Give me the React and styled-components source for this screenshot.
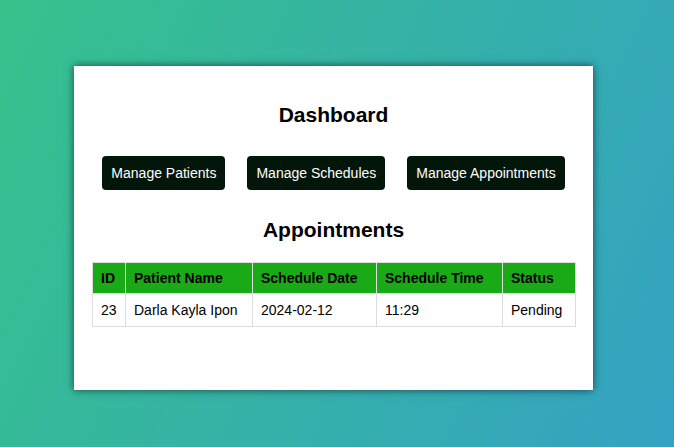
import React from 'react';
import styled, { createGlobalStyle } from 'styled-components';

const GlobalStyle = createGlobalStyle`
  html, body {
    margin: 0;
    padding: 0;
  }
  body {
    font-family: "Liberation Sans", Arial, sans-serif;
    font-size: 14px;
    color: #000;
  }
`;

const Page = styled.div`
  min-height: 100vh;
  box-sizing: border-box;
  display: flex;
  justify-content: center;
  align-items: flex-start;
  padding: 66px 7px 0 0;
  background: linear-gradient(115deg, #36c28b 0%, #34a2c3 100%);
`;

const Card = styled.div`
  width: 519px;
  box-sizing: border-box;
  background: #fff;
  padding: 20px 18px 63px;
  box-shadow: 0 0 8px rgba(0, 0, 0, 0.6);
  text-align: center;
`;

const Title = styled.h2`
  font-size: 21px;
  line-height: 24px;
  font-weight: bold;
  margin: ${(p) => p.$top}px 0 0;
`;

const ButtonRow = styled.div`
  display: flex;
  justify-content: center;
  gap: 22px;
  margin-top: 29px;
`;

const NavButton = styled.button`
  flex: none;
  white-space: nowrap;
  font-family: "Liberation Sans", Arial, sans-serif;
  font-size: 14px;
  line-height: 16px;
  color: #fff;
  background: #03160a;
  border: none;
  border-radius: 4px;
  padding: 9px 9px;
  margin: 0;
  cursor: pointer;
`;

const Table = styled.table`
  width: 100%;
  margin-top: 20px;
  border-collapse: collapse;
  table-layout: fixed;
  text-align: left;
`;

const Th = styled.th`
  width: ${(p) => p.$w}px;
  box-sizing: border-box;
  background: #1aaa16;
  border: 1px solid #ddd;
  padding: 7px 8px;
  line-height: 16px;
  font-weight: bold;
  white-space: nowrap;
`;

const Td = styled.td`
  border: 1px solid #ddd;
  padding: 8px 8px;
  line-height: 16px;
  white-space: nowrap;
`;

const columns = [
  { label: 'ID', width: 33 },
  { label: 'Patient Name', width: 127 },
  { label: 'Schedule Date', width: 124 },
  { label: 'Schedule Time', width: 126 },
  { label: 'Status', width: 73 },
];

const appointments = [
  { id: 23, name: 'Darla Kayla Ipon', date: '2024-02-12', time: '11:29', status: 'Pending' },
];

export default function App() {
  return (
    <>
      <GlobalStyle />
      <Page>
        <Card>
          <Title $top={17}>Dashboard</Title>
          <ButtonRow>
            <NavButton>Manage Patients</NavButton>
            <NavButton>Manage Schedules</NavButton>
            <NavButton>Manage Appointments</NavButton>
          </ButtonRow>
          <Title $top={28}>Appointments</Title>
          <Table>
            <thead>
              <tr>
                {columns.map((c) => (
                  <Th key={c.label} $w={c.width}>{c.label}</Th>
                ))}
              </tr>
            </thead>
            <tbody>
              {appointments.map((a) => (
                <tr key={a.id}>
                  <Td>{a.id}</Td>
                  <Td>{a.name}</Td>
                  <Td>{a.date}</Td>
                  <Td>{a.time}</Td>
                  <Td>{a.status}</Td>
                </tr>
              ))}
            </tbody>
          </Table>
        </Card>
      </Page>
    </>
  );
}
